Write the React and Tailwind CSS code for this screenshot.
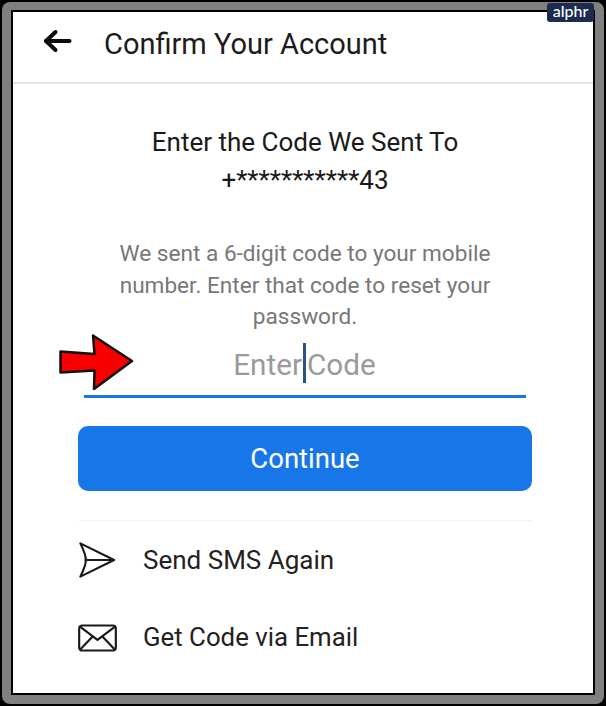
import React from "react";

export default function App() {
  return (
    <div className="w-[606px] h-[706px] bg-black p-[2px] font-['Roboto',sans-serif]">
      <div className="relative w-full h-full bg-[#808080] rounded-[8px] px-[9px] pt-[8px] pb-[9px]">
        <div className="absolute right-[10px] top-[1px] z-10 h-[19px] w-[47px] rounded-[3px] bg-[#1c2b4f] flex items-center justify-center text-white text-[16px] leading-none font-['Lato',sans-serif] font-medium pb-[3px]">
          alphr
        </div>
        <div className="w-full h-full border-2 border-black bg-white flex flex-col">
          <header className="h-[72px] shrink-0 border-b-2 border-[#e2e2e2] flex items-center pl-[30px] pb-[12px]">
            <svg width="29" height="24" viewBox="0 0 29 24" fill="none" stroke="#0c0c0c" strokeWidth="4" strokeLinecap="round" strokeLinejoin="round" className="shrink-0">
              <path d="M3 12H26.5" />
              <path d="M12.5 3L3 12L12.5 21" />
            </svg>
            <h1 className="ml-[32px] mt-[6px] text-[29px] leading-none font-normal text-[#1c1c1c]">Confirm Your Account</h1>
          </header>
          <main className="flex-1 flex flex-col items-center">
            <p className="mt-[39px] ml-[4px] text-[26px] leading-[38px] text-[#1a1a1a] text-center">
              Enter the Code We Sent To
              <br />
              +***********43
            </p>
            <p className="mt-[39px] ml-[4px] w-[420px] text-[22.6px] leading-[31.5px] text-[#777777] text-center">
              We sent a 6-digit code to your mobile number. Enter that code to reset your password.
            </p>
            <div className="relative mt-[7px] w-[442px] ml-[3px] h-[58px] border-b-[3px] border-[#1877e8] flex justify-center">
              <svg width="75" height="56" viewBox="0 0 75 56" className="absolute left-[-25px] top-[-6px]">
                <path d="M1.5 17.5L35.5 20L34 1.5L73 27L35 55L35.5 36.5L1.5 38.5Z" fill="#f80000" stroke="#111111" strokeWidth="2.5" strokeLinejoin="round" />
              </svg>
              <div className="flex items-start pt-[5px] text-[29.7px] leading-[40px] text-[#9a9a9a]">
                <span>Enter</span>
                <span className="mx-[1px] mt-[-2px] w-[3px] h-[40px] bg-[#27518f]" />
                <span>Code</span>
              </div>
            </div>
            <button className="mt-[28px] ml-[4px] w-[454px] h-[65px] rounded-[10px] bg-[#1877e8] text-white text-[27.5px] leading-none pt-[1px]">
              Continue
            </button>
            <div className="mt-[29px] ml-[4px] w-[454px] border-t border-[#f4f4f4]">
              <div className="mt-[12px] h-[54px] flex items-center">
                <svg width="38" height="38" viewBox="0 0 40 40" fill="none" stroke="#1a1a1a" strokeWidth="2.3" strokeLinejoin="round" strokeLinecap="round" className="shrink-0">
                  <path d="M2.5 2.5L38 20L2.5 37.5C2.5 37.5 9 24 8 20C9 16 2.5 2.5 2.5 2.5Z" />
                  <path d="M8.5 20H37" />
                </svg>
                <span className="ml-[27px] text-[26px] leading-none text-[#222222]">Send SMS Again</span>
              </div>
              <div className="mt-[24px] h-[54px] flex items-center">
                <svg width="39" height="28" viewBox="0 0 40 28" fill="none" stroke="#1a1a1a" strokeWidth="2.2" strokeLinejoin="round" strokeLinecap="round" className="shrink-0">
                  <rect x="1.2" y="1.2" width="37.6" height="25.6" rx="3" />
                  <path d="M3 3L20 16L37 3" />
                  <path d="M3 25L15 12.5" />
                  <path d="M37 25L25 12.5" />
                </svg>
                <span className="ml-[26px] text-[25.8px] leading-none text-[#222222]">Get Code via Email</span>
              </div>
            </div>
          </main>
        </div>
      </div>
    </div>
  );
}
